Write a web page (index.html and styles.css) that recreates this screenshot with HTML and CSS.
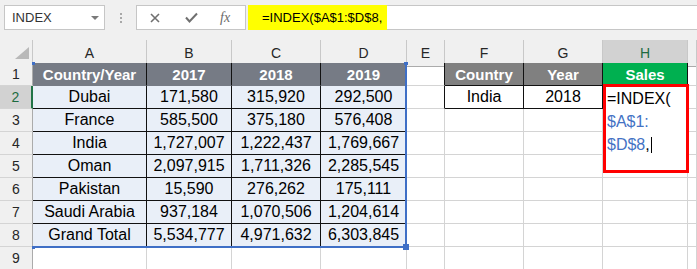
FILE: index.html
```html
<!DOCTYPE html>
<html lang="en">
  <head>
    <title>INDEX formula</title>
    <meta charset="UTF-8" />
    <link rel="stylesheet" href="styles.css">
  </head>
  <body>
    <div class="formula-bar">
      <div class="name-box">
        <span>INDEX</span>
        <span class="caret"></span>
      </div>
      <div class="grip"><i></i><i></i><i></i></div>
      <div class="fx-box">
        <svg class="icon-x" width="10" height="10" viewBox="0 0 10 10"><path d="M1 1L9 9M9 1L1 9" stroke="#707070" stroke-width="1.6" fill="none"/></svg>
        <svg class="icon-ok" width="13" height="11" viewBox="0 0 13 11"><path d="M1 5.5L4.5 9.5L12 1.5" stroke="#707070" stroke-width="2" fill="none"/></svg>
        <span class="fx">fx</span>
      </div>
      <div class="formula-input">
        <span class="formula-hl">=INDEX($A$1:$D$8,</span>
      </div>
    </div>

    <div class="sheet">
      <div class="row heads">
        <div class="corner"><svg width="33" height="23" viewBox="0 0 33 23"><path d="M15 19H29V7Z" fill="#b9b9b9"/></svg></div>
        <div class="ch">A</div><div class="ch">B</div><div class="ch">C</div><div class="ch">D</div>
        <div class="ch">E</div><div class="ch">F</div><div class="ch">G</div><div class="ch sel">H</div><div class="ch"></div>
      </div>
      <div class="row">
        <div class="rh">1</div>
        <div class="c th">Country/Year</div><div class="c th">2017</div><div class="c th">2018</div><div class="c th">2019</div>
        <div class="c edge"></div><div class="c gh">Country</div><div class="c gh">Year</div><div class="c green">Sales</div><div class="c"></div>
      </div>
      <div class="row">
        <div class="rh sel">2</div>
        <div class="c td">Dubai</div><div class="c td">171,580</div><div class="c td">315,920</div><div class="c td">292,500</div>
        <div class="c edge"></div><div class="c box">India</div><div class="c box">2018</div><div class="c"></div><div class="c"></div>
      </div>
      <div class="row">
        <div class="rh">3</div>
        <div class="c td">France</div><div class="c td">585,500</div><div class="c td">375,180</div><div class="c td">576,408</div>
        <div class="c"></div><div class="c"></div><div class="c"></div><div class="c"></div><div class="c"></div>
      </div>
      <div class="row">
        <div class="rh">4</div>
        <div class="c td">India</div><div class="c td">1,727,007</div><div class="c td">1,222,437</div><div class="c td">1,769,667</div>
        <div class="c"></div><div class="c"></div><div class="c"></div><div class="c"></div><div class="c"></div>
      </div>
      <div class="row">
        <div class="rh">5</div>
        <div class="c td">Oman</div><div class="c td">2,097,915</div><div class="c td">1,711,326</div><div class="c td">2,285,545</div>
        <div class="c"></div><div class="c"></div><div class="c"></div><div class="c"></div><div class="c"></div>
      </div>
      <div class="row">
        <div class="rh">6</div>
        <div class="c td">Pakistan</div><div class="c td">15,590</div><div class="c td">276,262</div><div class="c td">175,111</div>
        <div class="c"></div><div class="c"></div><div class="c"></div><div class="c"></div><div class="c"></div>
      </div>
      <div class="row">
        <div class="rh">7</div>
        <div class="c td">Saudi Arabia</div><div class="c td">937,184</div><div class="c td">1,070,506</div><div class="c td">1,204,614</div>
        <div class="c"></div><div class="c"></div><div class="c"></div><div class="c"></div><div class="c"></div>
      </div>
      <div class="row">
        <div class="rh">8</div>
        <div class="c td">Grand Total</div><div class="c td">5,534,777</div><div class="c td">4,971,632</div><div class="c td">6,303,845</div>
        <div class="c"></div><div class="c"></div><div class="c"></div><div class="c"></div><div class="c"></div>
      </div>
      <div class="row">
        <div class="rh">9</div>
        <div class="c"></div><div class="c"></div><div class="c"></div><div class="c"></div>
        <div class="c"></div><div class="c"></div><div class="c"></div><div class="c"></div><div class="c"></div>
      </div>

      <!-- range highlight for $A$1:$D$8 -->
      <div class="range">
        <span class="dot tl"></span><span class="dot tr"></span><span class="dot bl"></span><span class="dot br"></span>
      </div>

      <!-- in-cell editor on H2 -->
      <div class="editor">
        <div>=INDEX(</div>
        <div class="ref">$A$1:</div>
        <div><span class="ref">$D$8</span>,<span class="cursor"></span></div>
      </div>
    </div>
  </body>
</html>
```

FILE: styles.css
```css
body {
  margin: 0;
  width: 697px;
  height: 269px;
  overflow: hidden;
  font-family: "Liberation Sans", Arial, sans-serif;
  color: #000;
  background: #fff;
}

/* formula bar */
.formula-bar {
  display: flex;
  height: 40px;
  box-sizing: border-box;
  padding-top: 5px;
  background: #f0f0f0;
}
.formula-bar > div {
  height: 25px;
  box-sizing: border-box;
}
.name-box {
  width: 101px;
  margin-left: 4px;
  background: #fff;
  border: 1px solid #c6c6c6;
  display: flex;
  align-items: center;
  justify-content: space-between;
  padding: 0 5px 0 7px;
  font-size: 13px;
  color: #333;
}
.caret {
  width: 0;
  height: 0;
  border-left: 4px solid transparent;
  border-right: 4px solid transparent;
  border-top: 4px solid #7a7a7a;
}
.grip {
  width: 31px;
  display: flex;
  flex-direction: column;
  align-items: center;
  justify-content: center;
  gap: 2px;
}
.grip i {
  width: 2px;
  height: 2px;
  background: #a8a8a8;
}
.fx-box {
  width: 110px;
  background: #fff;
  border: 1px solid #c6c6c6;
  display: flex;
  align-items: center;
  padding-left: 13px;
}
.icon-ok {
  margin-left: 25px;
}
.fx {
  margin-left: 22px;
  font-family: "Liberation Serif", serif;
  font-style: italic;
  font-size: 14px;
  color: #6a6a6a;
}
.formula-input {
  flex: 1;
  margin-left: 2px;
  margin-right: -2px;
  background: #fff;
  border: 1px solid #c6c6c6;
  border-left: none;
  display: flex;
}
.formula-hl {
  width: 139px;
  margin-top: -1px;
  height: 25px;
  box-sizing: border-box;
  background: #ffff00;
  padding-left: 14px;
  font-size: 13px;
  line-height: 25px;
  white-space: nowrap;
}

/* sheet grid */
.sheet {
  position: relative;
}
.row {
  display: grid;
  grid-template-columns: 33px 114px 85px 89px 86px 38px 79px 79px 85px 9px;
  height: 23px;
}
.row > div {
  box-sizing: border-box;
  border-right: 1px solid #d4d4d4;
  border-bottom: 1px solid #d4d4d4;
  display: flex;
  align-items: center;
  justify-content: center;
  white-space: nowrap;
}
.heads > div {
  background: #f0f0f0;
  border-right-color: #c8c8c8;
  border-bottom-color: #ababab;
  font-size: 14px;
  color: #262626;
}
.heads .corner {
  display: block;
}
.heads .sel {
  background: #d2d2d2;
  border-bottom: 2px solid #217346;
  color: #1d6b40;
}
.rh {
  background: #f0f0f0;
  border-right-color: #ababab !important;
  font-size: 14px;
  color: #262626;
}
.rh.sel {
  background: #d2d2d2;
  border-right: 2px solid #217346 !important;
  color: #1d6b40;
}
.c {
  font-size: 16px;
}
.th {
  background: #767b85;
  color: #fff;
  font-weight: bold;
  font-size: 15px;
  border-right-color: #111 !important;
  border-bottom-color: transparent !important;
}
.td {
  background: #e9eff8;
  border-right-color: #111 !important;
  border-bottom-color: #111 !important;
}
.edge {
  border-right-color: #111 !important;
}
.gh {
  background: #808080;
  color: #fff;
  font-weight: bold;
  font-size: 15px;
  border-right-color: #111 !important;
  border-bottom-color: #111 !important;
}
.green {
  background: #00b050;
  color: #fff;
  font-weight: bold;
  font-size: 15px;
  border-right-color: #111 !important;
  border-bottom-color: #111 !important;
}
.box {
  border-right-color: #111 !important;
  border-bottom-color: #111 !important;
}

/* overlays */
.range {
  position: absolute;
  left: 33px;
  top: 23px;
  width: 374px;
  height: 185px;
  box-sizing: border-box;
  border-right: 2px solid #3f6fc6;
  border-bottom: 2px solid #3f6fc6;
}
.dot {
  position: absolute;
  background: #3f6fc6;
  width: 3px;
  height: 3px;
}
.dot.tl { left: -1px; top: -1px; }
.dot.tr { right: -3px; top: -1px; width: 4px; }
.dot.bl { left: -1px; bottom: -3px; }
.dot.br { right: -4px; bottom: -4px; width: 6px; height: 6px; }

.editor {
  position: absolute;
  left: 603px;
  top: 44px;
  width: 86px;
  height: 89px;
  box-sizing: border-box;
  border: 3px solid #ff0000;
  background: #fff;
  padding-left: 1px;
  font-size: 16px;
  line-height: 23px;
}
.ref {
  color: #4472c4;
}
.cursor {
  display: inline-block;
  width: 1px;
  height: 16px;
  background: #000;
  margin-left: 1px;
  vertical-align: -3px;
}
```
